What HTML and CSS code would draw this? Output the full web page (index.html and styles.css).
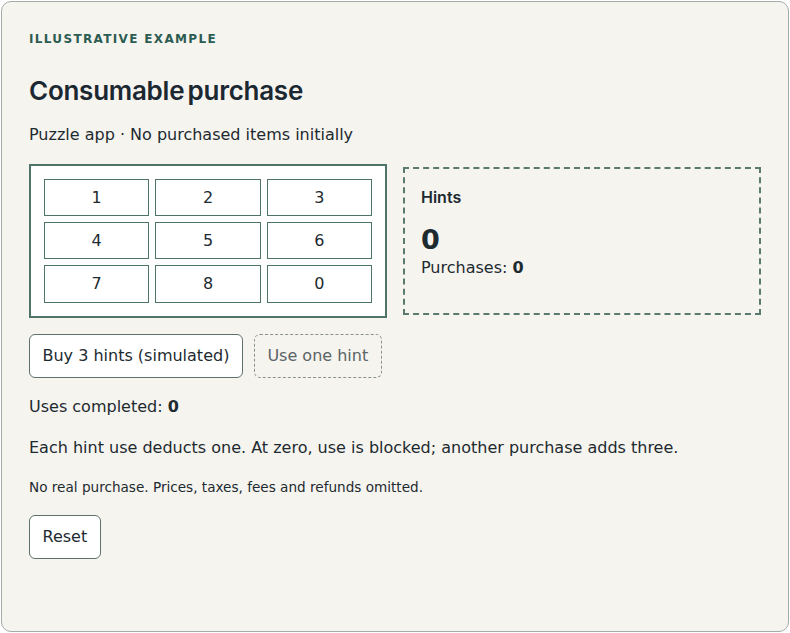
FILE: index.html
```html
<!DOCTYPE html>
<html lang="en">
<head>
<meta charset="utf-8">
<title>Consumable purchase</title>
<link rel="stylesheet" href="styles.css">
</head>
<body>
<main class="card">
  <p class="eyebrow">Illustrative example</p>
  <h1 class="title">Consumable purchase</h1>
  <p class="subtitle">Puzzle app · No purchased items initially</p>

  <section class="stage">
    <div class="keypad">
      <button class="key">1</button>
      <button class="key">2</button>
      <button class="key">3</button>
      <button class="key">4</button>
      <button class="key">5</button>
      <button class="key">6</button>
      <button class="key">7</button>
      <button class="key">8</button>
      <button class="key">0</button>
    </div>
    <div class="balance">
      <h2 class="balance-label">Hints</h2>
      <div class="balance-count">0</div>
      <p class="balance-meta">Purchases: <strong>0</strong></p>
    </div>
  </section>

  <div class="actions">
    <button class="btn">Buy 3 hints (simulated)</button>
    <button class="btn btn-disabled">Use one hint</button>
  </div>

  <p class="text">Uses completed: <strong>0</strong></p>
  <p class="text">Each hint use deducts one. At zero, use is blocked; another purchase adds three.</p>
  <p class="note">No real purchase. Prices, taxes, fees and refunds omitted.</p>

  <button class="btn">Reset</button>
</main>
</body>
</html>
```

FILE: styles.css
```css
html, body {
  margin: 0;
  padding: 0;
  background: #ffffff;
}

body {
  font-family: "DejaVu Sans", sans-serif;
  font-size: 16px;
  line-height: 1.6;
  color: #1d2a30;
}

.card {
  box-sizing: border-box;
  margin: 1px;
  height: calc(100vh - 2px);
  padding: 28px 27px;
  background: #f6f4ef;
  border: 1px solid #a3aca8;
  border-radius: 10px;
}

.eyebrow {
  margin: 0;
  font-size: 12px;
  font-weight: 700;
  letter-spacing: 0.112em;
  text-transform: uppercase;
  color: #2c5c52;
}

.title {
  margin: 26px 0 16px;
  font-family: Inter, sans-serif;
  font-size: 26px;
  font-weight: 600;
  line-height: 1.2;
  letter-spacing: -0.01em;
  word-spacing: -3px;
  color: #1b2731;
}

.subtitle {
  margin: 0 0 16px;
}

/* keypad and hint balance side by side */
.stage {
  display: grid;
  grid-template-columns: 1fr 1fr;
  align-items: center;
  gap: 16px;
}

.keypad {
  display: grid;
  grid-template-columns: repeat(3, 1fr);
  gap: 6px;
  padding: 13px;
  background: #ffffff;
  border: 2px solid #4e7468;
}

.key {
  font: inherit;
  color: inherit;
  padding: 8px 0;
  background: #ffffff;
  border: 1px solid #4e7468;
  border-radius: 0;
  line-height: 1.2;
}

.balance {
  padding: 16px;
  border: 2px dashed #5a7a70;
}

.balance-label {
  margin: 0 0 14px;
  font-family: Inter, sans-serif;
  font-size: 16px;
  font-weight: 600;
  line-height: 1.6;
}

.balance-count {
  font-size: 27px;
  font-weight: 700;
  line-height: 31px;
}

.balance-meta {
  margin: 0 0 16px;
}

.actions {
  display: flex;
  gap: 11px;
  margin-top: 16px;
}

.btn {
  font: inherit;
  color: #1d2a30;
  padding: 11.5px 12.5px;
  line-height: 1.2;
  background: #ffffff;
  border: 1px solid #5f716b;
  border-radius: 6px;
}

.btn-disabled {
  color: #5b6466;
  background: transparent;
  border: 1px dashed #8a9290;
}

.text {
  margin: 16px 0;
}

.note {
  margin: 16px 0;
  font-size: 13.6px;
}
```
